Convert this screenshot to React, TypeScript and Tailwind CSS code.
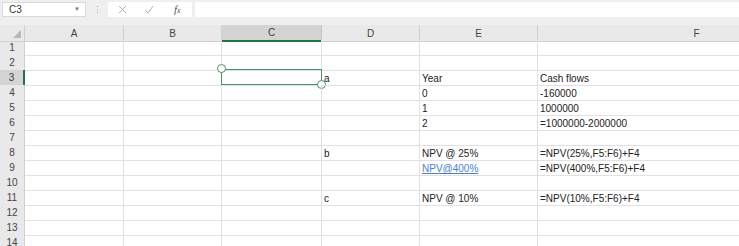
import React from 'react';

// column letters; widths are set on the grid below, F runs past the window
const cols = ['A', 'B', 'C', 'D', 'E', 'F'];

type Cell = { text: string; link?: boolean };

// sheet contents keyed by row, then column
const data: Record<number, Record<string, Cell>> = {
  3: { D: { text: 'a' }, E: { text: 'Year' }, F: { text: 'Cash flows' } },
  4: { E: { text: '0' }, F: { text: '-160000' } },
  5: { E: { text: '1' }, F: { text: '1000000' } },
  6: { E: { text: '2' }, F: { text: '=1000000-2000000' } },
  8: { D: { text: 'b' }, E: { text: 'NPV @ 25%' }, F: { text: '=NPV(25%,F5:F6)+F4' } },
  9: { E: { text: 'NPV@400%', link: true }, F: { text: '=NPV(400%,F5:F6)+F4' } },
  11: { D: { text: 'c' }, E: { text: 'NPV @ 10%' }, F: { text: '=NPV(10%,F5:F6)+F4' } },
};

const rows = Array.from({ length: 14 }, (_, i) => i + 1);

const gridCols = 'grid grid-cols-[25px_99px_98px_100px_98px_118px_318px]';

const FormulaBar = () => (
  <div className="h-[25px] bg-[#efefef] flex items-start pt-[2px]">
    <div className="ml-[2px] w-[84px] h-[15px] bg-white border border-[#d9d9d9] flex items-center justify-between pl-[6px] pr-[5px]">
      <span className="text-[#333]">C3</span>
      <span className="text-[6px] text-[#777]">▼</span>
    </div>
    <div className="w-[22px] h-[15px] flex flex-col items-center justify-center gap-[2px]">
      <span className="w-[1px] h-[1px] bg-[#aaa]" />
      <span className="w-[1px] h-[1px] bg-[#aaa]" />
      <span className="w-[1px] h-[1px] bg-[#aaa]" />
    </div>
    <div className="w-[84px] h-[15px] bg-white flex items-center pl-[10px]">
      <svg width="9" height="9" viewBox="0 0 9 9" stroke="#b3b3b3" strokeWidth="1">
        <path d="M1 1 L8 8 M8 1 L1 8" />
      </svg>
      <svg className="ml-[17px]" width="10" height="9" viewBox="0 0 10 9" fill="none" stroke="#b3b3b3" strokeWidth="1">
        <path d="M1 5 L4 8 L9 1" />
      </svg>
      <span className="ml-[20px] font-['Liberation_Serif'] italic text-[11px] text-[#555] leading-none">
        f<span className="text-[8px]">x</span>
      </span>
    </div>
    <div className="ml-[3px] flex-1 h-[15px] bg-white" />
  </div>
);

const HeaderRow = () => (
  <div className={`${gridCols} h-[15px]`}>
    <div className="bg-[#e9e9e9] border-r border-b border-[#d0d0d0] relative">
      <svg className="absolute right-[3px] bottom-[3px]" width="8" height="8" viewBox="0 0 8 8">
        <path d="M8 0 L8 8 L0 8 Z" fill="#b8b8b8" />
      </svg>
    </div>
    {cols.map(c => (
      <div
        key={c}
        className={
          c === 'C'
            ? 'bg-[#d4d4d4] border-r border-[#c4c4c4] border-b-2 border-b-[#217346] flex items-center justify-center text-[#3a3a3a]'
            : 'bg-[#e9e9e9] border-r border-b border-[#d0d0d0] flex items-center justify-center text-[#444]'
        }
      >
        {c}
      </div>
    ))}
  </div>
);

const Selection = () => (
  <>
    <div className="absolute left-[-1px] top-[-1px] w-[101px] h-[16px] border border-[#4e9168] pointer-events-none" />
    <div className="absolute left-[-5px] top-[-6px] w-[9px] h-[9px] rounded-full bg-white border border-[#4e9168]" />
    <div className="absolute left-[95px] top-[10px] w-[9px] h-[9px] rounded-full bg-white border border-[#4e9168]" />
  </>
);

export default function App() {
  return (
    <div className="w-[739px] h-[246px] overflow-hidden bg-white font-['Liberation_Sans',Arial,sans-serif] text-[10px]">
      <FormulaBar />
      <HeaderRow />
      {rows.map(r => (
        <div key={r} className={`${gridCols} h-[15px]`}>
          <div
            className={
              r === 3
                ? 'bg-[#d4d4d4] border-b border-[#c8c8c8] border-r-2 border-r-[#217346] flex items-center justify-center text-[#3a3a3a]'
                : 'bg-[#e9e9e9] border-r border-b border-[#d0d0d0] flex items-center justify-center text-[#444]'
            }
          >
            {r}
          </div>
          {cols.map(c => {
            const cell = data[r]?.[c];
            return (
              <div
                key={c}
                className="relative border-r border-b border-[#e1e1e1] flex items-end pl-[2px] pb-[1px] leading-none whitespace-nowrap"
              >
                {cell && (
                  <span className={cell.link ? 'text-[#4a7fd0] underline' : 'text-[#222]'}>
                    {cell.text}
                  </span>
                )}
                {r === 3 && c === 'C' && <Selection />}
              </div>
            );
          })}
        </div>
      ))}
    </div>
  );
}
